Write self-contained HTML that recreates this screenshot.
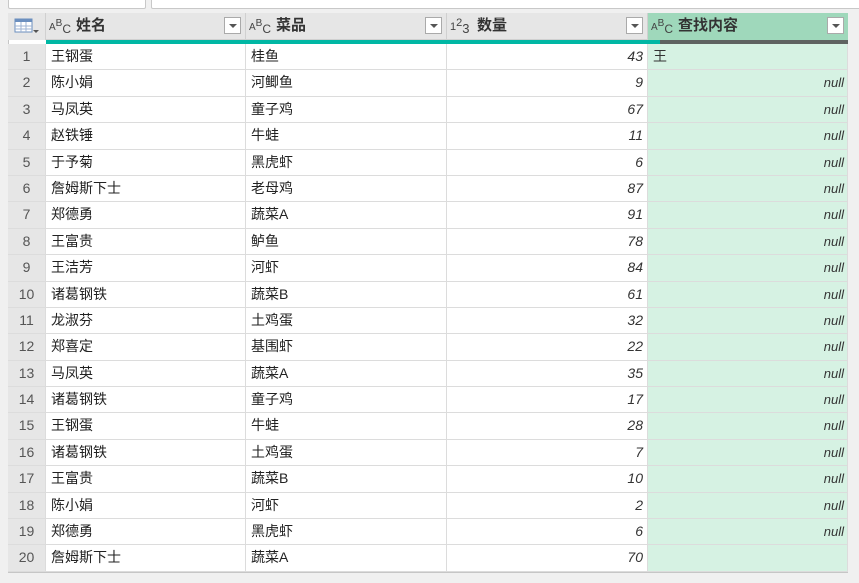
<!DOCTYPE html>
<html><head><meta charset="utf-8"><style>
body{margin:0;width:859px;height:583px;background:#f0f0f0;overflow:hidden;font-family:"Liberation Sans","Noto Sans CJK SC",sans-serif;position:relative}
.tb{position:absolute;top:-2px;height:9px;background:#fff;border:1px solid #c8c8c8;border-radius:2px}
.grid{position:absolute;left:8px;top:13px;width:840px;height:560px;background:#fff;border:1px solid #c6c6c6;box-sizing:border-box}
.hdr{position:absolute;left:8px;top:13px;height:27px;width:840px;background:#e6e6e6;border-bottom:1px solid #d0d0d0;box-sizing:border-box}
.hc{position:absolute;top:0;height:27px;border-right:1px solid #d0d0d0;box-sizing:border-box;font-size:15px;font-weight:bold;color:#333;line-height:26px}
.dd{position:absolute;right:4px;top:4px;width:17px;height:17px;background:#fff;border:1px solid #aaa;box-sizing:border-box}
.dd:after{content:"";position:absolute;left:4px;top:6px;border-left:4px solid transparent;border-right:4px solid transparent;border-top:4px solid #555}
.ic{position:absolute;left:3px;top:0;font-size:10px;font-weight:normal;color:#444}
.ic i{font-style:normal;position:relative}
.teal{position:absolute;top:40px;height:4px;background:#00b7a4}
.rows{position:absolute;left:8px;top:44px;width:840px}
.r{height:26.4px;position:relative;border-bottom:1px solid #dcdcdc;box-sizing:border-box;font-size:14px;color:#222}
.r div{position:absolute;top:0;height:100%;line-height:25px;box-sizing:border-box;border-right:1px solid #dcdcdc}
.n{left:0;width:38px;background:#e6e6e6;text-align:center;color:#555;font-size:14px}
.a{left:38px;width:200px;padding-left:5px}
.b{left:238px;width:201px;padding-left:5px}
.c{left:439px;width:201px;text-align:right;padding-right:4px;font-style:italic;color:#333}
.d{left:640px;width:200px;background:#d6f2e3;text-align:right;padding-right:3px;font-style:italic;color:#333;font-size:13px}
</style></head><body>
<div class="tb" style="left:8px;width:136px"></div>
<div class="tb" style="left:151px;width:712px"></div>
<div class="grid"></div>
<div class="hdr">
 <div class="hc" style="left:0;width:38px;background:#e6e6e6">
  <svg width="26" height="18" style="position:absolute;left:6px;top:5px"><rect x="1" y="1" width="17" height="13" fill="#fff" stroke="#6b8fbf"/><rect x="1" y="1" width="17" height="3" fill="#6b8fbf"/><path d="M7 4v10M12 4v10M1 8h17M1 11h17" stroke="#9db3d3"/><path d="M19 12l3 3 3-3z" fill="#555"/></svg>
 </div>
 <div class="hc" style="left:38px;width:200px"><span class="ic">A<i style="top:-4px">B</i><i style="top:3px;font-size:12px">C</i></span><span style="position:absolute;left:30px">姓名</span><div class="dd"></div></div>
 <div class="hc" style="left:238px;width:201px"><span class="ic">A<i style="top:-4px">B</i><i style="top:3px;font-size:12px">C</i></span><span style="position:absolute;left:30px">菜品</span><div class="dd"></div></div>
 <div class="hc" style="left:439px;width:201px"><span class="ic" style="font-size:11px">1<i style="top:-4px">2</i><i style="top:3px;font-size:13px">3</i></span><span style="position:absolute;left:30px">数量</span><div class="dd"></div></div>
 <div class="hc" style="left:640px;width:200px;background:#9fd8bb;border-right:none"><span class="ic">A<i style="top:-4px">B</i><i style="top:3px;font-size:12px">C</i></span><span style="position:absolute;left:30px">查找内容</span><div class="dd"></div></div>
</div>
<div class="teal" style="left:46px;width:602px"></div>
<div class="teal" style="left:648px;width:12px"></div>
<div class="teal" style="left:660px;width:188px;background:#5f6361"></div>
<div class="rows">
<div class="r"><div class="n">1</div><div class="a">王钢蛋</div><div class="b">桂鱼</div><div class="c">43</div><div class="d" style="text-align:left;padding-left:5px;font-style:normal;font-size:14px">王</div></div>
<div class="r"><div class="n">2</div><div class="a">陈小娟</div><div class="b">河鲫鱼</div><div class="c">9</div><div class="d">null</div></div>
<div class="r"><div class="n">3</div><div class="a">马凤英</div><div class="b">童子鸡</div><div class="c">67</div><div class="d">null</div></div>
<div class="r"><div class="n">4</div><div class="a">赵铁锤</div><div class="b">牛蛙</div><div class="c">11</div><div class="d">null</div></div>
<div class="r"><div class="n">5</div><div class="a">于予菊</div><div class="b">黑虎虾</div><div class="c">6</div><div class="d">null</div></div>
<div class="r"><div class="n">6</div><div class="a">詹姆斯下士</div><div class="b">老母鸡</div><div class="c">87</div><div class="d">null</div></div>
<div class="r"><div class="n">7</div><div class="a">郑德勇</div><div class="b">蔬菜A</div><div class="c">91</div><div class="d">null</div></div>
<div class="r"><div class="n">8</div><div class="a">王富贵</div><div class="b">鲈鱼</div><div class="c">78</div><div class="d">null</div></div>
<div class="r"><div class="n">9</div><div class="a">王洁芳</div><div class="b">河虾</div><div class="c">84</div><div class="d">null</div></div>
<div class="r"><div class="n">10</div><div class="a">诸葛钢铁</div><div class="b">蔬菜B</div><div class="c">61</div><div class="d">null</div></div>
<div class="r"><div class="n">11</div><div class="a">龙淑芬</div><div class="b">土鸡蛋</div><div class="c">32</div><div class="d">null</div></div>
<div class="r"><div class="n">12</div><div class="a">郑喜定</div><div class="b">基围虾</div><div class="c">22</div><div class="d">null</div></div>
<div class="r"><div class="n">13</div><div class="a">马凤英</div><div class="b">蔬菜A</div><div class="c">35</div><div class="d">null</div></div>
<div class="r"><div class="n">14</div><div class="a">诸葛钢铁</div><div class="b">童子鸡</div><div class="c">17</div><div class="d">null</div></div>
<div class="r"><div class="n">15</div><div class="a">王钢蛋</div><div class="b">牛蛙</div><div class="c">28</div><div class="d">null</div></div>
<div class="r"><div class="n">16</div><div class="a">诸葛钢铁</div><div class="b">土鸡蛋</div><div class="c">7</div><div class="d">null</div></div>
<div class="r"><div class="n">17</div><div class="a">王富贵</div><div class="b">蔬菜B</div><div class="c">10</div><div class="d">null</div></div>
<div class="r"><div class="n">18</div><div class="a">陈小娟</div><div class="b">河虾</div><div class="c">2</div><div class="d">null</div></div>
<div class="r"><div class="n">19</div><div class="a">郑德勇</div><div class="b">黑虎虾</div><div class="c">6</div><div class="d">null</div></div>
<div class="r"><div class="n">20</div><div class="a">詹姆斯下士</div><div class="b">蔬菜A</div><div class="c">70</div><div class="d"></div></div>
</div>
</body></html>
